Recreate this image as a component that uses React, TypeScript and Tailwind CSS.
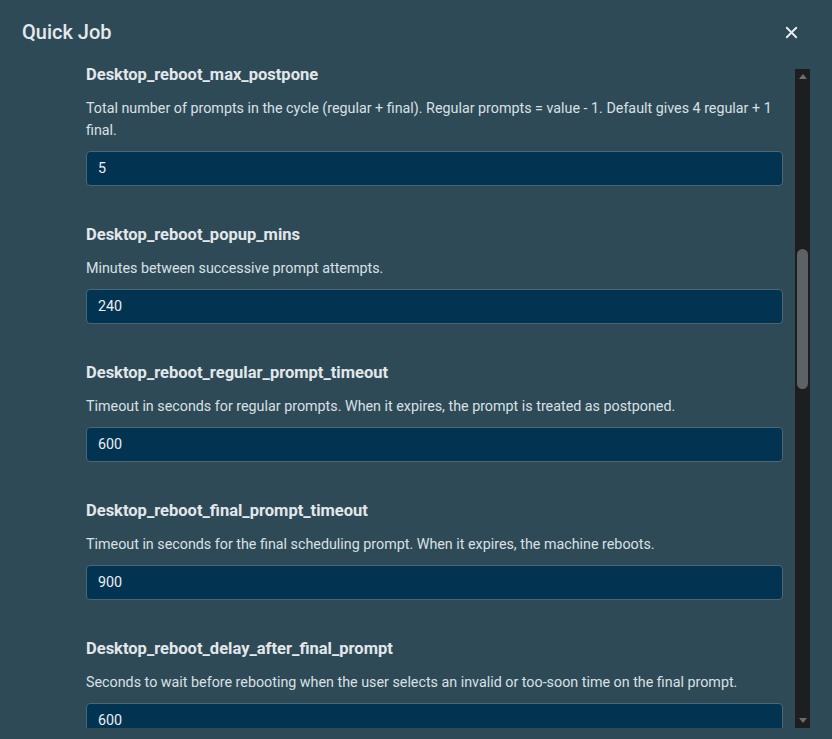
import { X } from 'lucide-react'

interface Field {
  name: string
  description: string
  value: string
}

const fields: Field[] = [
  {
    name: 'Desktop_reboot_max_postpone',
    description:
      'Total number of prompts in the cycle (regular + final). Regular prompts = value - 1. Default gives 4 regular + 1 final.',
    value: '5',
  },
  {
    name: 'Desktop_reboot_popup_mins',
    description: 'Minutes between successive prompt attempts.',
    value: '240',
  },
  {
    name: 'Desktop_reboot_regular_prompt_timeout',
    description: 'Timeout in seconds for regular prompts. When it expires, the prompt is treated as postponed.',
    value: '600',
  },
  {
    name: 'Desktop_reboot_final_prompt_timeout',
    description: 'Timeout in seconds for the final scheduling prompt. When it expires, the machine reboots.',
    value: '900',
  },
  {
    name: 'Desktop_reboot_delay_after_final_prompt',
    description: 'Seconds to wait before rebooting when the user selects an invalid or too-soon time on the final prompt.',
    value: '600',
  },
]

export default function App() {
  return (
    <div
      className="w-[832px] h-[739px] bg-[#2e4a57] flex flex-col overflow-hidden text-[#e3e8eb]"
      style={{ fontFamily: 'Roboto, "Noto Sans", sans-serif' }}
    >
      {/* header */}
      <div className="h-[64px] shrink-0 flex items-center justify-between pl-[22px] pr-[31px]">
        <h1 className="text-[20px] font-medium text-[#e4e9ec] leading-none">Quick Job</h1>
        <button className="text-[#e6ebee]">
          <X size={19} strokeWidth={2.4} />
        </button>
      </div>

      {/* body */}
      <div className="flex-1 min-h-0 flex pb-[11px]">
        <div className="flex-1 min-w-0 overflow-hidden pl-[86px] pr-[12px] -mt-px">
          {fields.map(f => (
            <div key={f.name} className="mb-[37px]">
              <div className="text-[16.5px] leading-[24px] font-bold text-[#e2e7ea]">{f.name}</div>
              <p className="mt-[10px] text-[14.3px] leading-[22px] text-[#d9e0e4]">{f.description}</p>
              <div className="mt-[10px] h-[35px] rounded-[4px] border border-[#4b6674] bg-[#023451] flex items-center pl-[11px] text-[14.3px] text-[#e8eef1]">
                {f.value}
              </div>
            </div>
          ))}
        </div>

        {/* scrollbar */}
        <div className="w-[15px] mt-[5px] mr-[22px] bg-[#1d1e1f] flex flex-col items-center">
          <div className="h-[15px] flex items-center justify-center">
            <div className="w-0 h-0 border-l-[4px] border-r-[4px] border-b-[5px] border-l-transparent border-r-transparent border-b-[#6b6e70]" />
          </div>
          <div className="flex-1 w-full relative">
            <div className="absolute left-[2px] right-[2px] top-[165px] h-[140px] rounded-full bg-[#5f6265]" />
          </div>
          <div className="h-[15px] flex items-center justify-center">
            <div className="w-0 h-0 border-l-[4px] border-r-[4px] border-t-[5px] border-l-transparent border-r-transparent border-t-[#6b6e70]" />
          </div>
        </div>
      </div>
    </div>
  )
}
